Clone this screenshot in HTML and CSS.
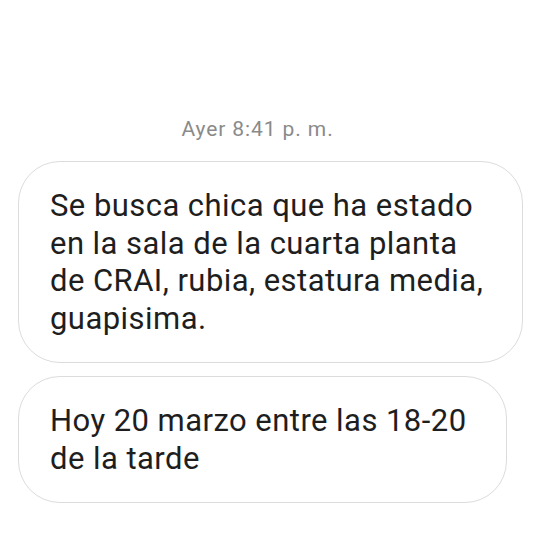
FILE: index.html
```html
<!DOCTYPE html>
<html lang="es">
<head>
<meta charset="utf-8">
<title>Mensajes</title>
<link rel="stylesheet" href="styles.css">
</head>
<body>
<main class="chat">
  <div class="timestamp">Ayer 8:41 p. m.</div>
  <div class="bubble">Se busca chica que ha estado<br>en la sala de la cuarta planta<br>de CRAI, rubia, estatura media,<br>guapisima.</div>
  <div class="bubble">Hoy 20 marzo entre las 18-20<br>de la tarde</div>
</main>
</body>
</html>
```

FILE: styles.css
```css
html, body {
  margin: 0;
  padding: 0;
  background: #ffffff;
}

.chat {
  display: flex;
  flex-direction: column;
  align-items: flex-start;
  gap: 13px;
  padding: 115px 10px 0 18px;
  font-family: Roboto, "Noto Sans", sans-serif;
}

.timestamp {
  align-self: stretch;
  text-align: center;
  padding-right: 32px;
  font-size: 21px;
  letter-spacing: 0.9px;
  line-height: 28px;
  color: #8a8a8a;
  margin-bottom: 5px;
}

.bubble {
  box-sizing: border-box;
  padding: 25px 39px 25px 31px;
  border: 1.5px solid #dcdcdc;
  border-radius: 42px;
  font-size: 31px;
  letter-spacing: 0.45px;
  line-height: 37.5px;
  color: #1e1e1e;
}
```
